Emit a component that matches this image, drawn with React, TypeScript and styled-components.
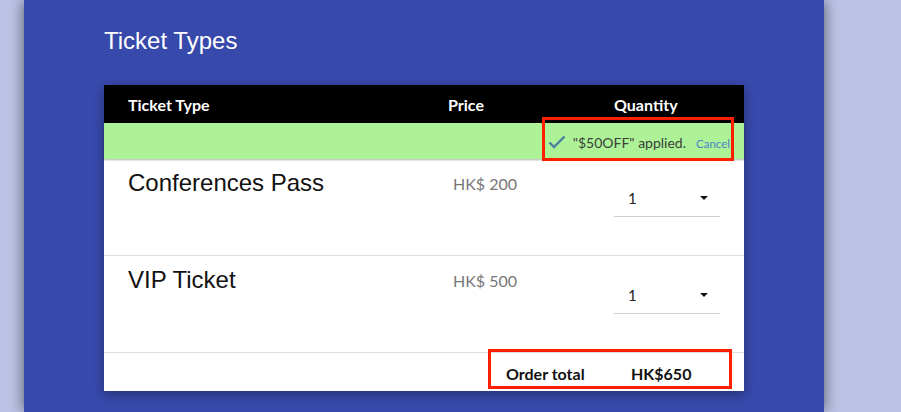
import React from "react";
import styled, { createGlobalStyle } from "styled-components";

const Global = createGlobalStyle`
  html, body { margin: 0; padding: 0; }
  body {
    background: #bcc3e5;
    font-family: Lato, "Open Sans", sans-serif;
    overflow: hidden;
  }
`;

const Page = styled.div`
  width: 901px;
  height: 412px;
  display: flex;
  overflow: hidden;
`;

const Panel = styled.main`
  margin-left: 24px;
  width: 800px;
  height: 412px;
  background: #3749aa;
  box-shadow: 0 0 14px rgba(0, 0, 0, 0.55);
  padding: 26px 0 0 80px;
  box-sizing: border-box;
  position: relative;
  z-index: 1;
`;

const Title = styled.h2`
  margin: 0 0 29px 0;
  font-family: "Liberation Sans", Arial, sans-serif;
  font-weight: 400;
  font-size: 24px;
  line-height: 30px;
  color: #ffffff;
`;

const Card = styled.section`
  width: 640px;
  background: #ffffff;
  box-shadow: 0 3px 10px rgba(0, 0, 0, 0.35);
  position: relative;
`;

const HeaderRow = styled.div`
  display: grid;
  grid-template-columns: 320px 166px 1fr;
  height: 38px;
  align-items: center;
  padding-left: 24px;
  background: #000000;
  color: #ffffff;
  font-family: Lato, sans-serif;
  font-weight: 700;
  font-size: 16px;
`;

const PromoBar = styled.div`
  height: 36px;
  background: #adf297;
  display: flex;
  align-items: center;
  justify-content: flex-end;
  padding-right: 14px;
  gap: 10px;
  box-shadow: 0 1px 2px rgba(0, 0, 0, 0.3);
  position: relative;
  z-index: 1;
`;

const PromoText = styled.span`
  display: flex;
  align-items: center;
  gap: 7px;
  font-family: Lato, sans-serif;
  font-size: 14px;
  color: #3b3f3a;
  padding-top: 2px;
`;

const CancelLink = styled.a`
  font-family: Lato, sans-serif;
  font-size: 11.5px;
  color: #4a85c9;
  text-decoration: none;
  padding-top: 4px;
`;

const TicketRow = styled.div`
  display: grid;
  grid-template-columns: 320px 166px 1fr;
  height: 97px;
  padding-left: 24px;
  align-items: start;
  border-bottom: 1px solid #dcdcdc;
  box-sizing: border-box;
`;

const TicketName = styled.div`
  font-family: "Liberation Sans", Arial, sans-serif;
  font-size: 24px;
  color: #111111;
  padding-top: 10px;
`;

const TicketPrice = styled.div`
  font-family: Lato, sans-serif;
  font-size: 16px;
  color: #777777;
  padding: 15px 0 0 5px;
`;

const Select = styled.div`
  margin-top: 22px;
  width: 106px;
  height: 36px;
  box-sizing: border-box;
  border-bottom: 1px solid #cfcfcf;
  display: flex;
  align-items: center;
  justify-content: space-between;
  padding: 0 12px 2px 14px;
  font-family: Lato, sans-serif;
  font-size: 15px;
  color: #222222;
`;

const Caret = styled.span`
  width: 0;
  height: 0;
  border-left: 4px solid transparent;
  border-right: 4px solid transparent;
  border-top: 4px solid #111111;
`;

const Footer = styled.div`
  height: 38px;
  display: grid;
  grid-template-columns: 402px 125px auto;
  align-items: center;
  padding-top: 3px;
  box-sizing: border-box;
  font-family: Lato, sans-serif;
  font-weight: 700;
  font-size: 16px;
  color: #111111;
`;

const Highlight = styled.div<{ $left: number; $top: number; $w: number; $h: number }>`
  position: absolute;
  left: ${(p) => p.$left}px;
  top: ${(p) => p.$top}px;
  width: ${(p) => p.$w}px;
  height: ${(p) => p.$h}px;
  border: 3px solid #ff1f00;
  box-sizing: border-box;
  pointer-events: none;
  z-index: 2;
`;

const CheckIcon = () => (
  <svg width="18" height="14" viewBox="0 0 18 14">
    <path d="M1.5 7.5 L6 12 L16.5 1.5" fill="none" stroke="#4b7f9e" strokeWidth="2.4" />
  </svg>
);

const tickets = [
  { name: "Conferences Pass", price: "HK$ 200", qty: 1 },
  { name: "VIP Ticket", price: "HK$ 500", qty: 1 },
];

export default function App() {
  return (
    <Page>
      <Global />
      <Panel>
        <Title>Ticket Types</Title>
        <Card>
          <HeaderRow>
            <span>Ticket Type</span>
            <span>Price</span>
            <span>Quantity</span>
          </HeaderRow>
          <PromoBar>
            <PromoText>
              <CheckIcon />
              "$50OFF" applied.
            </PromoText>
            <CancelLink>Cancel</CancelLink>
          </PromoBar>
          {tickets.map((t) => (
            <TicketRow key={t.name}>
              <TicketName>{t.name}</TicketName>
              <TicketPrice>{t.price}</TicketPrice>
              <Select>
                <span>{t.qty}</span>
                <Caret />
              </Select>
            </TicketRow>
          ))}
          <Footer>
            <span />
            <span>Order total</span>
            <span>HK$650</span>
          </Footer>
          <Highlight $left={438} $top={32} $w={192} $h={44} />
          <Highlight $left={384} $top={264} $w={244} $h={40} />
        </Card>
      </Panel>
    </Page>
  );
}
